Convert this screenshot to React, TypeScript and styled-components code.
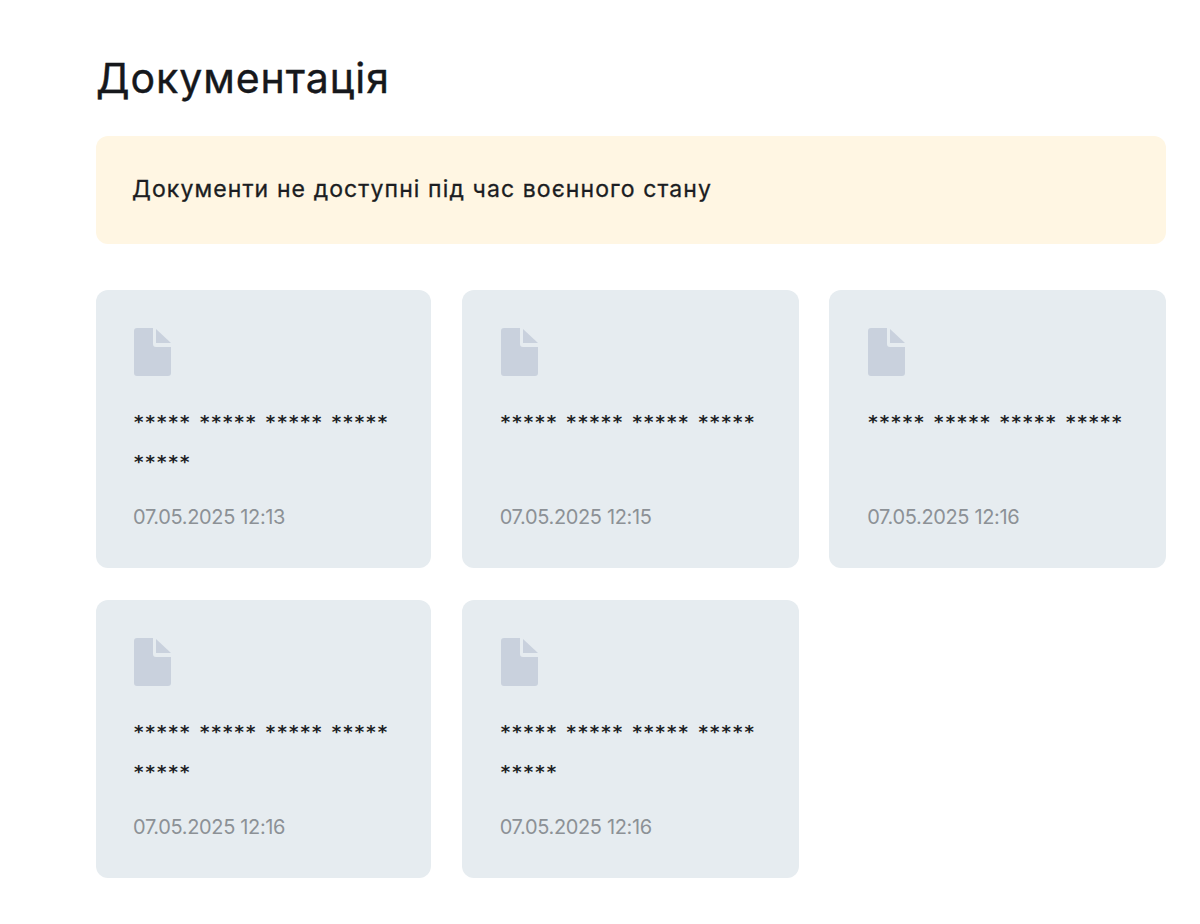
import React from "react";
import styled, { createGlobalStyle } from "styled-components";

const Global = createGlobalStyle`
  html, body { margin: 0; padding: 0; background: #fff; }
  body { font-family: "Inter", "Liberation Sans", sans-serif; }
`;

const Page = styled.main`
  width: 1070px;
  height: 924px;
  box-sizing: border-box;
  margin-left: 96px;
  padding-top: 53px;
`;

const Title = styled.h1`
  margin: 0;
  font-size: 41px;
  line-height: 51px;
  font-weight: 400;
  letter-spacing: 0.95px;
  -webkit-text-stroke: 0.4px #16181c;
  color: #16181c;
`;

const Notice = styled.div`
  margin-top: 32px;
  height: 108px;
  box-sizing: border-box;
  padding: 0 36px 2px;
  display: flex;
  align-items: center;
  background: #fff6e3;
  border-radius: 12px;
  font-size: 23px;
  font-weight: 400;
  letter-spacing: 1.1px;
  -webkit-text-stroke: 0.3px #1b1d22;
  color: #1b1d22;
`;

const Grid = styled.div`
  margin-top: 46px;
  display: grid;
  grid-template-columns: 335.2px 337px 336.8px;
  column-gap: 30.5px;
  row-gap: 32px;
`;

const Card = styled.article`
  height: 278px;
  box-sizing: border-box;
  padding: 38px 38px 0;
  background: #e6ecf0;
  border-radius: 12px;
  display: flex;
  flex-direction: column;

  &:nth-child(3n + 2),
  &:nth-child(3n) {
    padding-left: 39px;
  }
`;

const Icon = styled.svg`
  width: 37px;
  height: 48px;
  display: block;
  flex: none;
`;

const Name = styled.div`
  margin-top: 26px;
  height: 80px;
  font-family: "DejaVu Sans", sans-serif;
  font-size: 18px;
  font-weight: 700;
  line-height: 40px;
  letter-spacing: 2.1px;
  color: #1b1d22;
`;

const Stamp = styled.div`
  margin-top: 23px;
  margin-left: -1px;
  font-size: 20px;
  line-height: 24px;
  letter-spacing: -0.35px;
  color: #8c9196;
`;

const FileIcon = () => (
  <Icon viewBox="0 0 37 48" aria-hidden="true">
    <path
      d="M3 0H19V16a3 3 0 0 0 3 3H37V45a3 3 0 0 1-3 3H3a3 3 0 0 1-3-3V3a3 3 0 0 1 3-3Z"
      fill="#c9d1dd"
    />
    <path d="M22 1L37 15H22Z" fill="#c9d1dd" />
  </Icon>
);

const docs = [
  { name: "***** ***** ***** ***** *****", date: "07.05.2025 12:13" },
  { name: "***** ***** ***** *****", date: "07.05.2025 12:15" },
  { name: "***** ***** ***** *****", date: "07.05.2025 12:16" },
  { name: "***** ***** ***** ***** *****", date: "07.05.2025 12:16" },
  { name: "***** ***** ***** ***** *****", date: "07.05.2025 12:16" },
];

export default function App() {
  return (
    <Page>
      <Global />
      <Title>Документація</Title>
      <Notice>Документи не доступні під час воєнного стану</Notice>
      <Grid>
        {docs.map((d, i) => (
          <Card key={i}>
            <FileIcon />
            <Name>{d.name}</Name>
            <Stamp>{d.date}</Stamp>
          </Card>
        ))}
      </Grid>
    </Page>
  );
}
